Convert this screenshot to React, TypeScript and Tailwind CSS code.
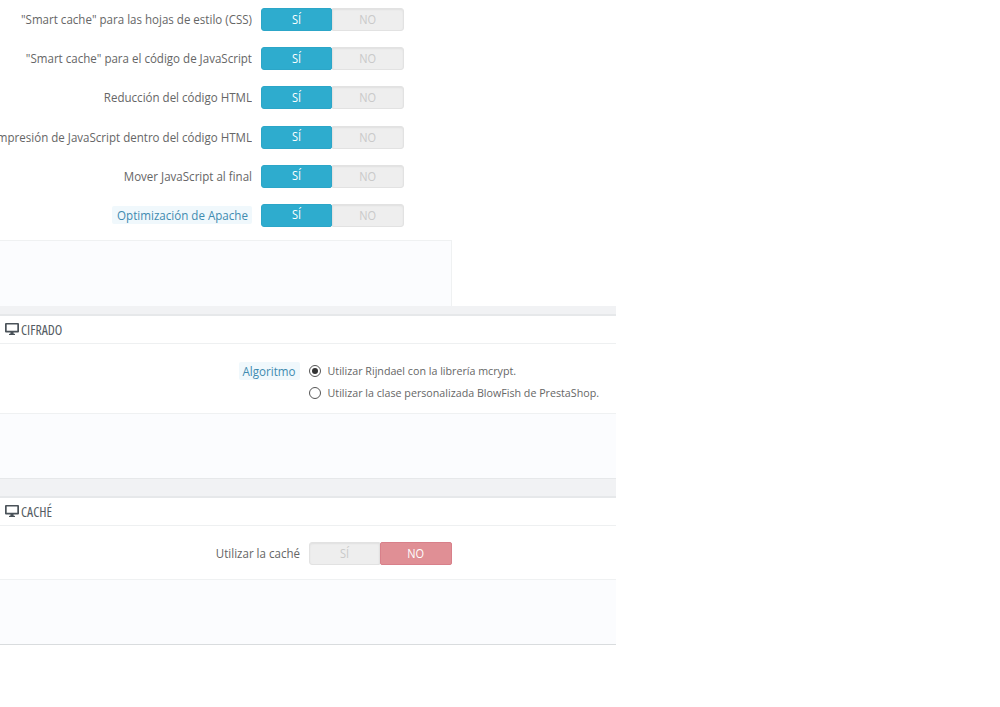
import React from "react";

const font = { fontFamily: '"Open Sans", sans-serif' };

function Word({ text }: { text: string }) {
  return <span className="inline-block scale-y-[1.1]">{text}</span>;
}

function Toggle({ yes }: { yes: boolean }) {
  const off = "flex items-center justify-center bg-[#eeeeee] text-[#c9c9c9] border border-[#e2e2e2] shadow-[inset_0_1px_2px_rgba(0,0,0,0.06)]";
  return (
    <div className="flex h-[23px] w-[142.5px] shrink-0 text-[11px] leading-none">
      {yes ? (
        <>
          <div className="flex w-[71px] items-center justify-center rounded-l-[3px] rounded-r-[2px] border border-[#2ca6c8] bg-[#2eacce] pb-[1px] text-white"><Word text="SÍ" /></div>
          <div className={off + " flex-1 rounded-r-[3px]"}><Word text="NO" /></div>
        </>
      ) : (
        <>
          <div className={off + " w-[71px] rounded-l-[3px]"}><Word text="SÍ" /></div>
          <div className="flex flex-1 items-center justify-center rounded-[2px] border border-[#d8808a] bg-[#e08f95] text-white"><Word text="NO" /></div>
        </>
      )}
    </div>
  );
}

function Label({ text, help }: { text: string; help?: boolean }) {
  return (
    <div className="flex min-w-0 flex-1 justify-end">
      <span
        className={
          help
            ? "shrink-0 whitespace-nowrap rounded-[2px] bg-[#f0f8fc] pt-[1.5px] pr-[4px] pb-[1.5px] pl-[5px] text-[11.6px] leading-[15px] text-[#3f8bb0]"
            : "shrink-0 whitespace-nowrap text-[11.55px] leading-[17px] text-[#666666]"
        }
      >
        <span className="inline-block scale-y-[1.08]">{text}</span>
      </span>
    </div>
  );
}

function Row({ text, help }: { text: string; help?: boolean }) {
  return (
    <div className="flex h-[23px] items-center gap-[9px]">
      <Label text={text} help={help} />
      <Toggle yes />
    </div>
  );
}

function Monitor() {
  return (
    <svg width="14" height="12" viewBox="0 0 14 12" className="shrink-0">
      <path fillRule="evenodd" fill="#4a5259" d="M1 0h12a1 1 0 0 1 1 1v7.500a1 1 0 0 1-1 1H8.500v1l1.500.5v1H4v-1l1.500-.5v-1H1a1 1 0 0 1-1-1V1a1 1 0 0 1 1-1Zm.7 1.600v6.200h10.600V1.600Z" />
    </svg>
  );
}

function Header({ title }: { title: string }) {
  return (
    <div className="flex h-[28px] items-center gap-[2px] border-b border-[#eef0f1] pl-[5px]">
      <Monitor />
      <span className="text-[13.8px] font-normal leading-none text-[#555c63] [font-stretch:75%]">{title}</span>
    </div>
  );
}

function Radio({ on, text }: { on?: boolean; text: string }) {
  return (
    <div className="flex h-[21px] items-center gap-[7px]">
      <span className="flex h-[12px] w-[12px] items-center justify-center rounded-full border border-[#555555] bg-white">
        {on && <span className="h-[6px] w-[6px] rounded-full bg-[#333333]" />}
      </span>
      <span className="whitespace-nowrap text-[10.7px] leading-none text-[#666666]">
        <span className="inline-block scale-y-[1.08]">{text}</span>
      </span>
    </div>
  );
}

export default function App() {
  return (
    <div className="h-[707px] w-[1000px] overflow-hidden bg-white" style={font}>
      <div className="w-[616px]">
        <div className="w-[452px]">
          <div className="flex w-[403.5px] flex-col gap-[16.2px] pt-[8px]">
            <Row text={'"Smart cache" para las hojas de estilo (CSS)'} />
            <Row text={'"Smart cache" para el código de JavaScript'} />
            <Row text="Reducción del código HTML" />
            <Row text="Compresión de JavaScript dentro del código HTML" />
            <Row text="Mover JavaScript al final" />
            <Row text="Optimización de Apache" help />
          </div>
          <div className="mt-[13px] h-[66px] border-t border-r border-[#eff1f2] bg-[#fbfcfe]" />
        </div>

        <div className="h-[10px] border-b-2 border-[#e6e8ea] bg-[#f1f2f4]" />
        <Header title="CIFRADO" />
        <div className="flex h-[69px] justify-end pt-[17px] pr-[17px]">
          <div className="flex h-[21px] items-center">
            <span className="rounded-[2px] bg-[#f0f8fc] px-[4px] py-[1.5px] text-[11.6px] leading-[15px] text-[#3f8bb0]">
              <span className="inline-block scale-y-[1.08]">Algoritmo</span>
            </span>
          </div>
          <div className="ml-[9px] flex flex-col gap-[1px]">
            <Radio on text="Utilizar Rijndael con la librería mcrypt." />
            <Radio text="Utilizar la clase personalizada BlowFish de PrestaShop." />
          </div>
        </div>
        <div className="h-[65px] border-t border-[#eff1f2] bg-[#fbfcfe]" />

        <div className="h-[20px] border-t border-b-2 border-[#e6e8ea] bg-[#f1f2f4]" />
        <Header title="CACHÉ" />
        <div className="flex h-[53px] w-[451.5px] items-center gap-[9px] pt-[3px]">
          <Label text="Utilizar la caché" />
          <Toggle yes={false} />
        </div>
        <div className="h-[66px] border-t border-b border-t-[#eff1f2] border-b-[#d9dcde] bg-[#fbfcfe]" />
      </div>
    </div>
  );
}
